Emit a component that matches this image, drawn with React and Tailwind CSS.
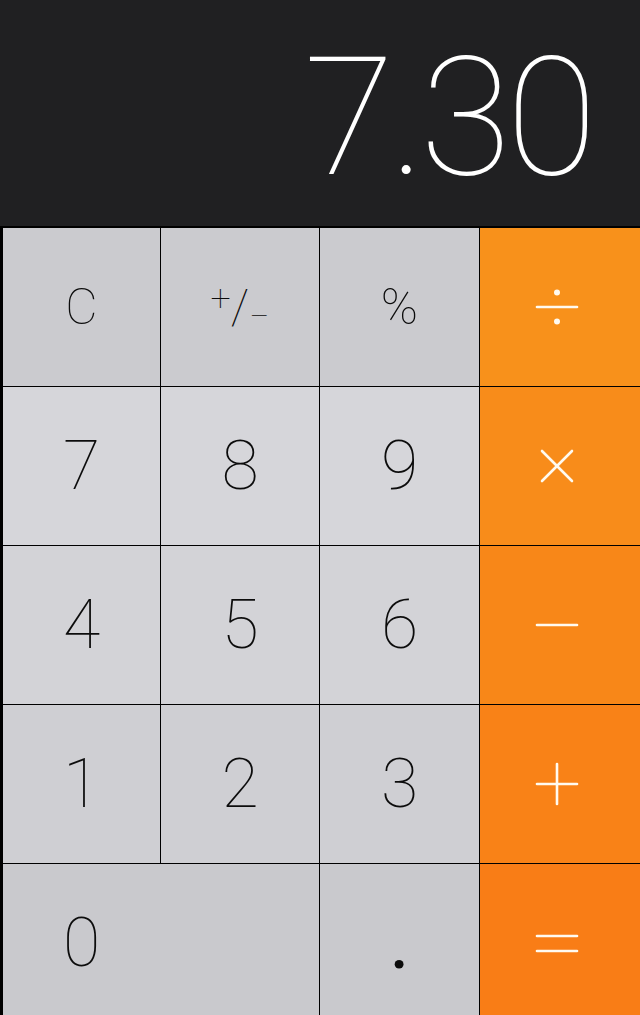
import React from "react"

const font = { fontFamily: "Roboto, 'Liberation Sans', sans-serif" }

function OpIcon({ type }) {
  // operator glyphs drawn as thin white strokes
  return (
    <svg width="44" height="44" viewBox="0 0 44 44" fill="none" stroke="#fffaf0" strokeWidth="2.6" strokeLinecap="round">
      {type === "div" && (
        <>
          <line x1="2" y1="22" x2="42" y2="22" />
          <circle cx="22" cy="7.5" r="3" fill="#fffaf0" stroke="none" />
          <circle cx="22" cy="36.5" r="3" fill="#fffaf0" stroke="none" />
        </>
      )}
      {type === "mul" && (
        <>
          <line x1="7" y1="7" x2="37" y2="37" />
          <line x1="37" y1="7" x2="7" y2="37" />
        </>
      )}
      {type === "sub" && <line x1="2" y1="22" x2="42" y2="22" />}
      {type === "add" && (
        <>
          <line x1="2" y1="22" x2="42" y2="22" />
          <line x1="22" y1="2" x2="22" y2="42" />
        </>
      )}
      {type === "eq" && (
        <>
          <line x1="2" y1="15" x2="42" y2="15" />
          <line x1="2" y1="30" x2="42" y2="30" />
        </>
      )}
    </svg>
  )
}

function Key({ children, className = "" }) {
  return (
    <div className={`flex items-center justify-center text-[#0c0c0c] font-thin ${className}`}>
      {children}
    </div>
  )
}

function Op({ type, className }) {
  return (
    <div className={`flex items-center justify-center pr-[6px] ${className}`}>
      <OpIcon type={type} />
    </div>
  )
}

export default function App() {
  return (
    <div className="w-[640px] h-[1015px] overflow-hidden bg-black flex flex-col" style={font}>
      {/* Display */}
      <div className="h-[226px] shrink-0 bg-[#202022] flex justify-end pr-[48px] pt-[35px]">
        <span className="text-[166px] leading-none font-thin text-white tracking-[-5px]">7.30</span>
      </div>

      {/* Keypad */}
      <div className="mt-[2px] pl-[3px] grid grid-cols-[157px_158px_159px_160px] grid-rows-[158px_158px_158px_158px_158px] gap-px">
        <Key className="bg-[#cbcbcf] text-[50px]">C</Key>
        <Key className="bg-[#cbcbcf]">
          <span className="inline-flex items-center">
            <span className="text-[36px] leading-none relative -top-[8px]">+</span>
            <span className="text-[48px] leading-none">/</span>
            <span className="text-[36px] leading-none relative top-[10px]">−</span>
          </span>
        </Key>
        <Key className="bg-[#cbcbcf] text-[50px]">%</Key>
        <Op type="div" className="bg-[#f8911b]" />

        <Key className="bg-[#d6d6da] text-[68px]">7</Key>
        <Key className="bg-[#d6d6da] text-[68px]">8</Key>
        <Key className="bg-[#d6d6da] text-[68px]">9</Key>
        <Op type="mul" className="bg-[#f88c1a]" />

        <Key className="bg-[#d3d3d7] text-[68px]">4</Key>
        <Key className="bg-[#d3d3d7] text-[68px]">5</Key>
        <Key className="bg-[#d3d3d7] text-[68px]">6</Key>
        <Op type="sub" className="bg-[#f88718]" />

        <Key className="bg-[#cfcfd3] text-[68px]">1</Key>
        <Key className="bg-[#cfcfd3] text-[68px]">2</Key>
        <Key className="bg-[#cfcfd3] text-[68px]">3</Key>
        <Op type="add" className="bg-[#f98217]" />

        <div className="col-span-2 bg-[#c9c9cd] flex items-center">
          <span className="w-[157px] text-center text-[68px] font-thin text-[#0c0c0c]">0</span>
        </div>
        <Key className="bg-[#c9c9cd] text-[64px] !font-medium pt-[8px]">.</Key>
        <Op type="eq" className="bg-[#f97d16]" />
      </div>
    </div>
  )
}
